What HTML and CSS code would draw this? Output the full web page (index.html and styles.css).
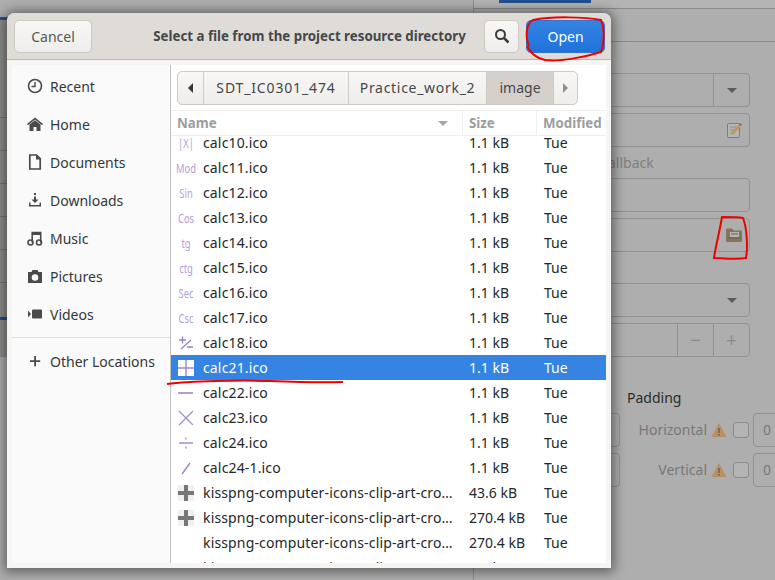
FILE: index.html
```html
<!DOCTYPE html>
<html lang="en">
<head>
    <meta charset="UTF-8">
    <meta name="viewport" content="width=device-width, initial-scale=1.0">
    <title>Select a file</title>
    <link rel="stylesheet" href="styles.css">
</head>
<body>

<!-- main window, dimmed behind the dialog -->
<div class="backdrop">
    <div class="left-strip">
        <div class="blue-mark first"></div>
        <div class="strip-line"></div>
        <div class="strip-line"></div>
        <div class="strip-line"></div>
        <div class="strip-line"></div>
        <div class="strip-line"></div>
        <div class="strip-line"></div>
        <div class="blue-mark second"></div>
    </div>
    <div class="panel">
        <div class="panel-tabs"><div class="panel-tab"></div></div>
        <div class="panel-rule"></div>
        <div class="field first-field">
            <span class="field-fill"></span>
            <span class="field-cell"><span class="caret"></span></span>
        </div>
        <div class="field">
            <span class="field-fill"></span>
            <svg class="field-icon" viewBox="0 0 16 16">
                <rect x="1.5" y="1.5" width="12" height="14" rx="1" fill="#b5b5b3" stroke="#7d7d7b"/>
                <path d="M4 5h6M4 8h5M4 11h3" stroke="#8e8e8c"/>
                <path d="M5 13l1-3 7-8 2 2-7 8z" fill="#b79a5f"/>
                <path d="M13 2l1-1 2 2-1 1z" fill="#a2535a"/>
            </svg>
        </div>
        <div class="field-label">allback</div>
        <div class="field"></div>
        <div class="field">
            <span class="field-fill"></span>
            <svg class="field-icon" viewBox="0 0 16 16">
                <path d="M0 2.5q0-1 1-1h5l1.500 2h7.500q1 0 1 1v9.500q0 1-1 1h-14q-1 0-1-1z" fill="#85755c"/>
                <rect x="4" y="5" width="9" height="5" fill="#b4b4b0"/>
                <path d="M5 7h7M1 11h14" stroke="#6d6250"/>
            </svg>
        </div>
        <div class="field gap-large">
            <span class="field-fill"></span>
            <span class="field-end"><span class="caret"></span></span>
        </div>
        <div class="field">
            <span class="field-fill"></span>
            <span class="field-cell sign">−</span>
            <span class="field-cell sign">+</span>
        </div>
        <div class="padding-title">Padding</div>
        <div class="padding-row">
            <span class="short-box"></span>
            <span class="padding-label">Horizontal</span>
            <svg class="warn" viewBox="0 0 16 16">
                <path d="M8 1l7.500 14h-15z" fill="#b98f63"/>
                <path d="M8 6v5M8 12v1.500" stroke="#6f6252" stroke-width="1.500"/>
            </svg>
            <span class="check"></span>
            <span class="zero-box">0</span>
        </div>
        <div class="padding-row">
            <span class="short-box"></span>
            <span class="padding-label">Vertical</span>
            <svg class="warn" viewBox="0 0 16 16">
                <path d="M8 1l7.500 14h-15z" fill="#b98f63"/>
                <path d="M8 6v5M8 12v1.500" stroke="#6f6252" stroke-width="1.500"/>
            </svg>
            <span class="check"></span>
            <span class="zero-box">0</span>
        </div>
    </div>
</div>

<div class="dialog">
    <div class="dialog-header">
        <div class="header-left"><button class="btn cancel">Cancel</button></div>
        <div class="dialog-title">Select a file from the project resource directory</div>
        <div class="header-right">
            <button class="btn search">
                <svg class="icon" viewBox="0 0 16 16"><circle cx="6.500" cy="6.500" r="4.500" fill="none" stroke="#3d3d3d" stroke-width="2"/><path d="M10 10l4.500 4.500" stroke="#3d3d3d" stroke-width="2.500"/></svg>
            </button>
            <button class="btn open">Open</button>
        </div>
    </div>
    <div class="dialog-body">
        <div class="sidebar">
            <div class="place">
                <svg class="icon" viewBox="0 0 16 16"><circle cx="8" cy="8" r="6.500" fill="none" stroke="#4a4a4a" stroke-width="1.600"/><path d="M8 4v4.500h-3.500" fill="none" stroke="#4a4a4a" stroke-width="1.400"/></svg>
                Recent
            </div>
            <div class="place">
                <svg class="icon" viewBox="0 0 16 16"><path d="M0 8l8-6.500 8 6.500-1 1.200-7-5.600-7 5.600z" fill="#4a4a4a"/><path d="M2.500 8.500v6.500h4v-4h3v4h4v-6.500l-5.500-4.200z" fill="#4a4a4a"/></svg>
                Home
            </div>
            <div class="place">
                <svg class="icon" viewBox="0 0 16 16"><path d="M2.800 1h6.700l3.700 3.700v10.300h-10.400z" fill="none" stroke="#4a4a4a" stroke-width="1.700"/><path d="M9 1v4.500h4.500z" fill="#4a4a4a"/></svg>
                Documents
            </div>
            <div class="place">
                <svg class="icon" viewBox="0 0 16 16"><path d="M7 1h2v2h-2zM7 4.500h2v3h2.500l-3.500 3.500-3.500-3.500h2.500z" fill="#4a4a4a"/><path d="M2 10.500l1.500 0 0 2.500h9l0-2.500 1.500 0 0 4-12 0z" fill="#4a4a4a"/></svg>
                Downloads
            </div>
            <div class="place">
                <svg class="icon" viewBox="0 0 16 16"><circle cx="3.500" cy="12.500" r="2.500" fill="none" stroke="#4a4a4a" stroke-width="1.600"/><circle cx="12" cy="12.500" r="2.500" fill="none" stroke="#4a4a4a" stroke-width="1.600"/><path d="M5.200 12.500v-10h8.500v10" fill="none" stroke="#4a4a4a" stroke-width="1.600"/><path d="M5 2h9v3h-9z" fill="#4a4a4a"/></svg>
                Music
            </div>
            <div class="place">
                <svg class="icon" viewBox="0 0 16 16"><path fill-rule="evenodd" d="M1 4h3.500l1-2h5l1 2h3.500v11h-14zM8 6.200a3.300 3.300 0 1 0 0 6.600a3.300 3.300 0 1 0 0-6.600z" fill="#4a4a4a"/></svg>
                Pictures
            </div>
            <div class="place">
                <svg class="icon" viewBox="0 0 16 16"><rect x="5" y="3.500" width="10" height="9" rx="1" fill="#4a4a4a"/><path d="M1 4.500l3 3.500-3 3.500z" fill="#4a4a4a"/></svg>
                Videos
            </div>
            <div class="sidebar-sep"></div>
            <div class="place">
                <svg class="icon" viewBox="0 0 16 16"><path d="M7.200 3h1.800v4.200h4.200v1.800h-4.200v4.200h-1.800v-4.200h-4.200v-1.800h4.200z" fill="#4a4a4a"/></svg>
                Other Locations
            </div>
        </div>
        <div class="browser">
            <div class="pathbar-wrap">
                <div class="pathbar">
                    <span class="crumb arrow"><span class="tri-left"></span></span>
                    <span class="crumb dir-a">SDT_IC0301_474</span>
                    <span class="crumb dir-b">Practice_work_2</span>
                    <span class="crumb current">image</span>
                    <span class="crumb arrow right"><span class="tri-right"></span></span>
                </div>
            </div>
            <div class="col-head">
                <span class="col-name">Name<span class="sort-caret"></span></span>
                <span class="col-size">Size</span>
                <span class="col-mod">Modified</span>
            </div>
            <div class="file-list">
                <div class="file-rows">
                    <div class="file"><span class="thumb">|X|</span><span class="fname">calc10.ico</span><span class="fsize">1.1 kB</span><span class="fmod">Tue</span></div>
                    <div class="file"><span class="thumb">Mod</span><span class="fname">calc11.ico</span><span class="fsize">1.1 kB</span><span class="fmod">Tue</span></div>
                    <div class="file"><span class="thumb">Sin</span><span class="fname">calc12.ico</span><span class="fsize">1.1 kB</span><span class="fmod">Tue</span></div>
                    <div class="file"><span class="thumb">Cos</span><span class="fname">calc13.ico</span><span class="fsize">1.1 kB</span><span class="fmod">Tue</span></div>
                    <div class="file"><span class="thumb">tg</span><span class="fname">calc14.ico</span><span class="fsize">1.1 kB</span><span class="fmod">Tue</span></div>
                    <div class="file"><span class="thumb">ctg</span><span class="fname">calc15.ico</span><span class="fsize">1.1 kB</span><span class="fmod">Tue</span></div>
                    <div class="file"><span class="thumb">Sec</span><span class="fname">calc16.ico</span><span class="fsize">1.1 kB</span><span class="fmod">Tue</span></div>
                    <div class="file"><span class="thumb">Csc</span><span class="fname">calc17.ico</span><span class="fsize">1.1 kB</span><span class="fmod">Tue</span></div>
                    <div class="file">
                        <svg class="thumb-svg" viewBox="0 0 16 16"><path d="M1 5h7M4.500 1.500v7M3 14l10-9M9 12h6" fill="none" stroke="#9a7fc6" stroke-width="1.300"/></svg>
                        <span class="fname">calc18.ico</span><span class="fsize">1.1 kB</span><span class="fmod">Tue</span>
                    </div>
                    <div class="file selected">
                        <svg class="thumb-svg" viewBox="0 0 16 16"><rect width="16" height="16" fill="#fff"/><path d="M0 8h16M8 0v16" stroke="#a184cf" stroke-width="1.400"/></svg>
                        <span class="fname">calc21.ico</span><span class="fsize">1.1 kB</span><span class="fmod">Tue</span>
                    </div>
                    <div class="file">
                        <svg class="thumb-svg" viewBox="0 0 16 16"><path d="M0 8h15" stroke="#9a7fc6" stroke-width="1.500"/></svg>
                        <span class="fname">calc22.ico</span><span class="fsize">1.1 kB</span><span class="fmod">Tue</span>
                    </div>
                    <div class="file">
                        <svg class="thumb-svg" viewBox="0 0 16 16"><path d="M1 1l14 14M15 1l-14 14" stroke="#a48ccd" stroke-width="1.200"/></svg>
                        <span class="fname">calc23.ico</span><span class="fsize">1.1 kB</span><span class="fmod">Tue</span>
                    </div>
                    <div class="file">
                        <svg class="thumb-svg" viewBox="0 0 16 16"><path d="M1 8h14M8 2.500v2M8 11.500v2" stroke="#a48ccd" stroke-width="1.300"/></svg>
                        <span class="fname">calc24.ico</span><span class="fsize">1.1 kB</span><span class="fmod">Tue</span>
                    </div>
                    <div class="file">
                        <svg class="thumb-svg" viewBox="0 0 16 16"><path d="M4 14l8-11" stroke="#9a7fc6" stroke-width="1.300"/></svg>
                        <span class="fname">calc24-1.ico</span><span class="fsize">1.1 kB</span><span class="fmod">Tue</span>
                    </div>
                    <div class="file">
                        <svg class="thumb-svg" viewBox="0 0 16 16"><rect width="16" height="16" fill="#f0f0f0"/><path d="M6 0h4v6h6v4h-6v6h-4v-6h-6v-4h6z" fill="#777"/></svg>
                        <span class="fname">kisspng-computer-icons-clip-art-cross-43.png</span><span class="fsize">43.6 kB</span><span class="fmod">Tue</span>
                    </div>
                    <div class="file">
                        <svg class="thumb-svg" viewBox="0 0 16 16"><rect width="16" height="16" fill="#f0f0f0"/><path d="M6 0h4v6h6v4h-6v6h-4v-6h-6v-4h6z" fill="#777"/></svg>
                        <span class="fname">kisspng-computer-icons-clip-art-cross-270.png</span><span class="fsize">270.4 kB</span><span class="fmod">Tue</span>
                    </div>
                    <div class="file"><span class="thumb"></span><span class="fname">kisspng-computer-icons-clip-art-cross-271.png</span><span class="fsize">270.4 kB</span><span class="fmod">Tue</span></div>
                    <div class="file"><span class="thumb"></span><span class="fname">kisspng-computer-icons-clip-art-cross-4.png</span><span class="fsize">4.0 kB</span><span class="fmod">Tue</span></div>
                </div>
            </div>
        </div>
    </div>
</div>

<!-- red pen marks drawn over the screenshot -->
<svg class="marks" viewBox="0 0 775 580">
    <path d="M529 46C525 36 526 24 533 20C552 16 585 17 601 20C605 30 604 44 601 52C585 57 560 62 545 60C535 58 530 52 527 46"/>
    <path d="M722 217C728 217 738 217 743 218C747 228 748 248 746 258C736 260 724 258 714 258C716 244 720 230 722 217Z"/>
    <path d="M167 384C190 381 240 380 270 381C295 382 320 383 343 382"/>
</svg>

</body>
</html>
```

FILE: styles.css
```css
html, body {
    margin: 0;
    padding: 0;
}
body {
    width: 775px;
    height: 580px;
    overflow: hidden;
    position: relative;
    font-family: "Noto Sans", "Open Sans", sans-serif;
    font-size: 14px;
    color: #2e3436;
    background-color: #aeaeae;
}

/* backdrop window */
.backdrop {
    position: absolute;
    inset: 0;
    background-color: #aeaeae;
}
.left-strip {
    position: absolute;
    left: 0;
    top: 17px;
    width: 10px;
    height: 340px;
    background-color: #8f8f8d;
    display: flex;
    flex-direction: column;
    gap: 32px;
}
.blue-mark {
    height: 3px;
    background-color: #23508e;
}
.blue-mark.first {
    margin-bottom: 65px;
}
.blue-mark.second {
    margin-top: 2px;
}
.strip-line {
    height: 1px;
    background-color: #777775;
}
.panel {
    position: absolute;
    left: 473px;
    top: 0;
    width: 276px;
    height: 580px;
    border-left: 1px solid #8f8f8f;
}
.panel-tabs {
    height: 8px;
    width: 302px;
    border-bottom: 1px solid #8a8a8a;
    background-color: #b4b4b4;
}
.panel-tab {
    width: 92px;
    height: 3px;
    margin-left: 25px;
    background-color: #23508e;
}
.panel-rule {
    height: 32px;
    width: 302px;
    border-bottom: 1px solid #8a8a8a;
}
.field {
    height: 32px;
    margin-top: 6px;
    border: 1px solid #929292;
    border-radius: 4px;
    display: flex;
    align-items: center;
}
.first-field {
    margin-top: 31px;
}
.gap-large {
    margin-top: 31px;
}
.field-fill {
    flex: 1;
}
.field-cell {
    width: 35px;
    height: 32px;
    border-left: 1px solid #929292;
    display: flex;
    align-items: center;
    justify-content: center;
}
.field-end {
    width: 35px;
    display: flex;
    justify-content: center;
}
.sign {
    font-size: 19px;
    color: #8a8a8a;
}
.caret {
    width: 0;
    height: 0;
    border-left: 5px solid transparent;
    border-right: 5px solid transparent;
    border-top: 5px solid #5c5c5c;
}
.field-icon {
    width: 16px;
    height: 16px;
    margin-right: 7px;
}
.field-label {
    height: 24px;
    margin-top: 4px;
    padding-left: 134px;
    line-height: 24px;
    color: #7f7f7f;
}
.field-label + .field {
    margin-top: 3px;
}
.padding-title {
    margin-top: 28px;
    height: 26px;
    line-height: 26px;
    padding-left: 153px;
    color: #2b2b2b;
}
.padding-row {
    width: 302px;
    height: 34px;
    margin-top: 6px;
    display: flex;
    align-items: center;
    color: #787878;
}
.padding-title + .padding-row {
    margin-top: 2px;
}
.short-box {
    width: 144px;
    height: 32px;
    border: 1px solid #929292;
    border-radius: 4px;
    flex-shrink: 0;
}
.padding-label {
    width: 87px;
    padding-bottom: 2px;
    text-align: right;
    flex-shrink: 0;
}
.warn {
    width: 16px;
    height: 16px;
    margin-left: 4px;
    flex-shrink: 0;
}
.check {
    width: 14px;
    height: 14px;
    margin-left: 6px;
    border: 1px solid #8c8c8c;
    border-radius: 3px;
    background-color: #b4b4b4;
    flex-shrink: 0;
}
.zero-box {
    width: 40px;
    height: 32px;
    line-height: 32px;
    margin-left: 4px;
    padding-left: 9px;
    border: 1px solid #929292;
    border-radius: 4px;
    flex-shrink: 0;
}

/* dialog */
.dialog {
    position: absolute;
    left: 7px;
    top: 13px;
    width: 604px;
    height: 555px;
    display: flex;
    flex-direction: column;
    background-color: #f6f5f4;
    border-radius: 8px 8px 0 0;
    box-shadow: 0 1px 12px 3px rgba(0, 0, 0, 0.45);
}
.dialog-header {
    height: 47px;
    flex-shrink: 0;
    display: grid;
    grid-template-columns: 1fr auto 1fr;
    align-items: center;
    padding: 0 6px 0 7px;
    background-color: #dfdcd8;
    border-bottom: 1px solid #bfb8b1;
    border-radius: 8px 8px 0 0;
    box-sizing: border-box;
}
.header-right {
    display: flex;
    justify-content: flex-end;
    gap: 7px;
}
.btn {
    height: 33px;
    font-family: inherit;
    font-size: 14px;
    color: #2e3436;
    border: 1px solid #cfc9c3;
    border-radius: 5px;
    background: linear-gradient(#f8f7f6, #efedeb);
    padding: 0;
}
.cancel {
    width: 78px;
    color: #55585a;
}
.search {
    width: 35px;
    display: flex;
    align-items: center;
    justify-content: center;
}
.open {
    width: 79px;
    color: #fff;
    border-color: #2f75cc;
    background: linear-gradient(#3584e4, #1f72db);
}
.dialog-title {
    font-size: 13.3px;
    font-weight: bold;
    color: #44484a;
    white-space: nowrap;
}
.dialog-body {
    flex: 1;
    display: flex;
    margin: 5px;
    min-height: 0;
    background-color: #fff;
}
.icon {
    width: 16px;
    height: 16px;
    flex-shrink: 0;
}
.sidebar {
    width: 158px;
    flex-shrink: 0;
    padding-top: 2px;
    background-color: #fafafa;
    border-right: 1px solid #c3c0bb;
}
.place {
    height: 38px;
    padding-left: 15px;
    display: flex;
    align-items: center;
    gap: 7px;
    color: #33383a;
}
.sidebar-sep {
    height: 1px;
    margin: 4px 0;
    background-color: #dfdfdd;
}
.browser {
    flex: 1;
    min-width: 0;
    display: flex;
    flex-direction: column;
}
.pathbar-wrap {
    height: 46px;
    flex-shrink: 0;
    padding: 6px 0 0 6px;
    box-sizing: border-box;
    background-color: #fff;
    border-bottom: 1px solid #efefed;
}
.pathbar {
    display: inline-flex;
    height: 34px;
    border: 1px solid #cfc9c3;
    border-radius: 5px;
    overflow: hidden;
    box-sizing: border-box;
    background: linear-gradient(#f8f7f6, #efedeb);
}
.crumb {
    display: flex;
    align-items: center;
    justify-content: center;
    height: 32px;
    padding-bottom: 2px;
    color: #44484a;
    border-right: 1px solid #cfc9c3;
    box-sizing: border-box;
    letter-spacing: 0.7px;
}
.arrow {
    width: 26px;
    padding-bottom: 0;
}
.arrow.right {
    width: 23px;
    border-right: none;
}
.dir-a {
    width: 145px;
    letter-spacing: 0.85px;
}
.dir-b {
    width: 138px;
}
.current {
    width: 67px;
    background-color: #d5d0cc;
    letter-spacing: 0;
}
.tri-left {
    border-top: 5px solid transparent;
    border-bottom: 5px solid transparent;
    border-right: 5px solid #33383a;
}
.tri-right {
    border-top: 5px solid transparent;
    border-bottom: 5px solid transparent;
    border-left: 5px solid #8f8f8d;
}
.col-head {
    height: 25px;
    flex-shrink: 0;
    display: flex;
    align-items: stretch;
    font-size: 13.3px;
    font-weight: bold;
    color: #9c9e9e;
    border-bottom: 1px solid #efefed;
    box-sizing: border-box;
}
.col-name {
    width: 291px;
    padding-left: 6px;
    box-sizing: border-box;
    display: flex;
    align-items: center;
    justify-content: space-between;
    padding-right: 14px;
}
.sort-caret {
    width: 0;
    height: 0;
    border-left: 5px solid transparent;
    border-right: 5px solid transparent;
    border-top: 5px solid #a6a6a6;
}
.col-size {
    width: 74px;
    padding-left: 6px;
    box-sizing: border-box;
    display: flex;
    align-items: center;
    border-left: 1px solid #efefed;
}
.col-mod {
    flex: 1;
    padding-left: 6px;
    display: flex;
    align-items: center;
    border-left: 1px solid #efefed;
    white-space: nowrap;
    overflow: hidden;
}
.file-list {
    flex: 1;
    min-height: 0;
    overflow: hidden;
}
.file-rows {
    margin-top: -6px;
}
.file {
    height: 25px;
    display: flex;
    align-items: center;
    color: #24282a;
}
.file.selected {
    background-color: #3584e4;
    color: #fff;
}
/* the .ico thumbnails are tiny pixel lettering, squeezed into 18px */
.thumb {
    width: 18px;
    margin-left: 6px;
    margin-right: 8px;
    flex-shrink: 0;
    display: flex;
    justify-content: center;
    font-size: 13px;
    white-space: nowrap;
    color: #b3a0d8;
    transform: scaleX(0.72);
}
.thumb-svg {
    width: 16px;
    height: 16px;
    margin-left: 7px;
    margin-right: 9px;
    flex-shrink: 0;
}
.fname {
    width: 255px;
    flex-shrink: 0;
    letter-spacing: 0.15px;
    white-space: nowrap;
    overflow: hidden;
    text-overflow: ellipsis;
}
.fsize {
    width: 86px;
    padding-left: 11px;
    box-sizing: border-box;
    flex-shrink: 0;
}
.fmod {
    flex: 1;
}
.marks {
    position: absolute;
    inset: 0;
    width: 775px;
    height: 580px;
    fill: none;
    stroke: #f00000;
    stroke-width: 2;
    pointer-events: none;
}
```
